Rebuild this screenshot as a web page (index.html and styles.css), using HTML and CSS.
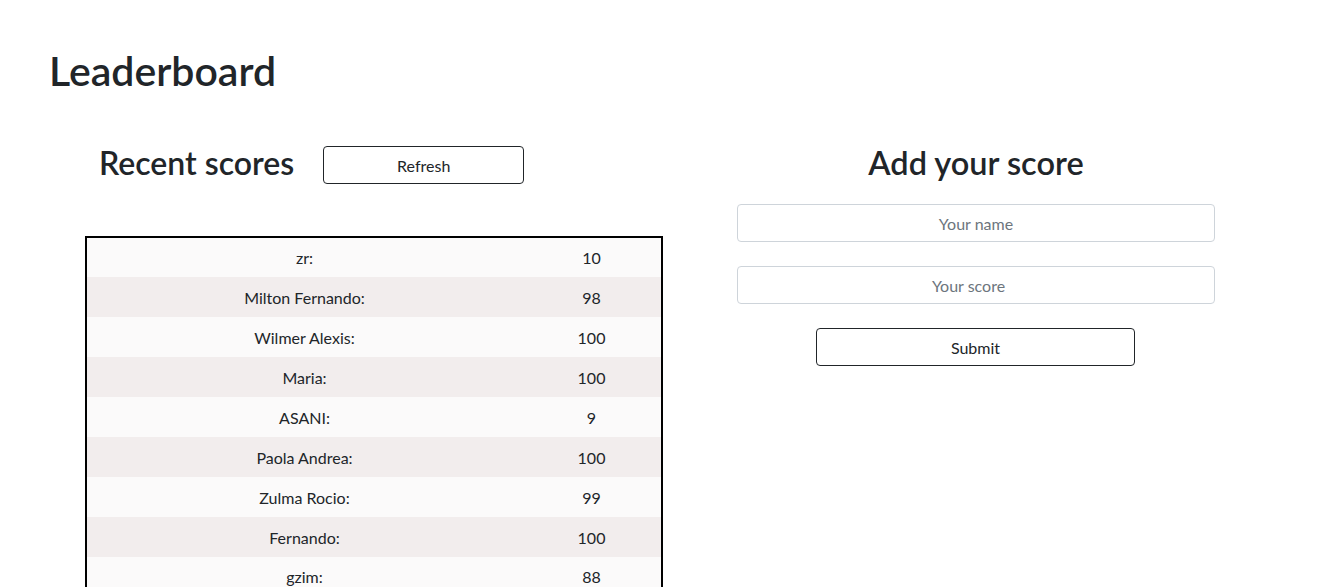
FILE: index.html
```html
<!DOCTYPE html>
<html lang="en">
<head>
<meta charset="utf-8">
<title>Leaderboard</title>
<link rel="stylesheet" href="styles.css">
</head>
<body>
<main class="page">
  <h1 class="title">Leaderboard</h1>
  <div class="columns">
    <section class="scores">
      <div class="scores-head">
        <h2 class="heading">Recent scores</h2>
        <button class="btn btn-refresh" type="button">Refresh</button>
      </div>
      <table class="board">
        <tbody>
          <tr><td class="name">zr:</td><td class="score">10</td></tr>
          <tr><td class="name">Milton Fernando:</td><td class="score">98</td></tr>
          <tr><td class="name">Wilmer Alexis:</td><td class="score">100</td></tr>
          <tr><td class="name">Maria:</td><td class="score">100</td></tr>
          <tr><td class="name">ASANI:</td><td class="score">9</td></tr>
          <tr><td class="name">Paola Andrea:</td><td class="score">100</td></tr>
          <tr><td class="name">Zulma Rocio:</td><td class="score">99</td></tr>
          <tr><td class="name">Fernando:</td><td class="score">100</td></tr>
          <tr><td class="name">gzim:</td><td class="score">88</td></tr>
        </tbody>
      </table>
    </section>
    <section class="add">
      <h2 class="heading heading-center">Add your score</h2>
      <form class="add-form">
        <input class="field" type="text" placeholder="Your name">
        <input class="field" type="number" placeholder="Your score">
        <button class="btn btn-submit" type="button">Submit</button>
      </form>
    </section>
  </div>
</main>
</body>
</html>
```
FILE: styles.css
```css
* { box-sizing: border-box; }

html, body {
  margin: 0;
  background: #fff;
}

body {
  font-family: Lato, "Noto Sans", sans-serif;
  color: #212529;
  font-size: 16px;
}

.page {
  padding: 47px 49px 0;
}

.title {
  margin: 0;
  font-size: 41px;
  font-weight: 600;
  line-height: 48px;
}

.columns {
  display: flex;
  align-items: flex-start;
  margin-top: 47px;
}

.scores {
  margin-left: 36px;
  width: 578px;
}

.scores-head {
  display: flex;
  align-items: flex-start;
  padding-left: 14px;
  gap: 29px;
  height: 94px;
}

.heading {
  margin: 2px 0 0;
  font-size: 32px;
  font-weight: 600;
  line-height: 38px;
}

.heading-center {
  text-align: center;
  font-size: 32.5px;
}

.btn {
  font: inherit;
  font-size: 16px;
  color: #212529;
  background: #fff;
  border: 1px solid #212529;
  border-radius: 4px;
  height: 38px;
  padding: 0 12px;
  cursor: pointer;
}

.btn-refresh {
  width: 201px;
  margin-top: 4px;
}

.board {
  width: 578px;
  border: 2px solid #000;
  border-collapse: collapse;
}

.board td {
  height: 40px;
  padding: 0;
  text-align: center;
  vertical-align: middle;
}

.board tr:nth-child(odd) { background: #fbfafa; }
.board tr:nth-child(even) { background: #f2eded; }

.board .name { width: 436px; }

.add {
  margin-left: 74px;
  width: 478px;
}

.add-form {
  display: flex;
  flex-direction: column;
  align-items: center;
  gap: 24px;
  margin-top: 22px;
}

.field {
  width: 100%;
  height: 38px;
  font: inherit;
  font-size: 16px;
  color: #212529;
  text-align: center;
  border: 1px solid #ced4da;
  border-radius: 4px;
  padding: 6px 12px;
  background: #fff;
}

.field::placeholder { color: #6c757d; }

.btn-submit {
  width: 319px;
  margin-right: 1px;
}
```
